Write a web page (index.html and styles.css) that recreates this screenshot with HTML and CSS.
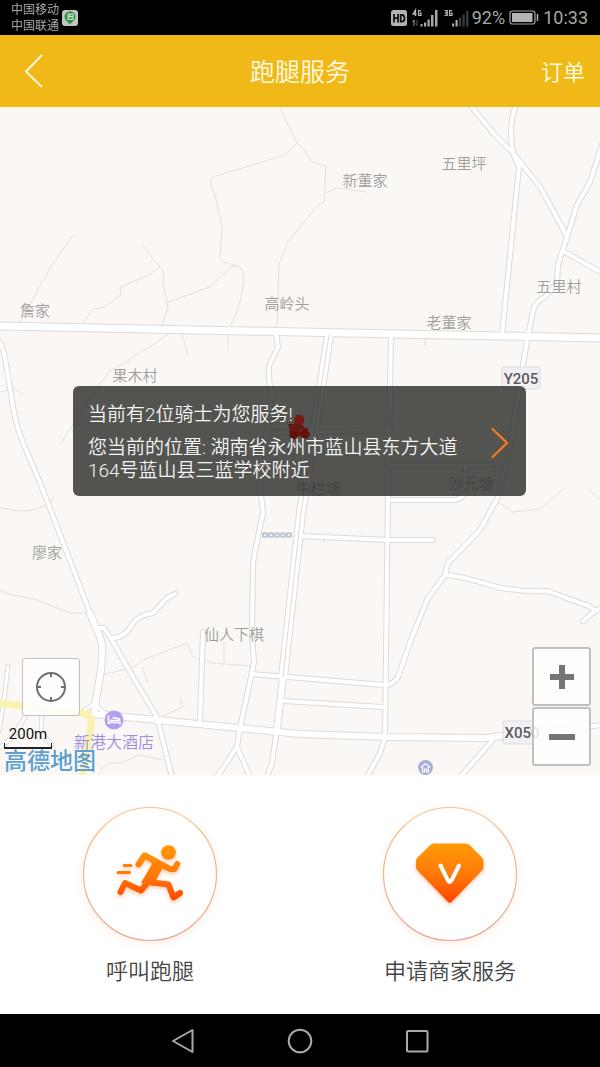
FILE: index.html
```html
<!DOCTYPE html>
<html lang="zh-CN">
<head>
<meta charset="utf-8">
<meta name="viewport" content="width=device-width, initial-scale=1">
<title>跑腿服务</title>
<link rel="stylesheet" href="styles.css">
</head>
<body>
<div class="app">
  <div class="status">
    <div class="carriers"><span>中国移动</span><span>中国联通</span></div>
    <svg class="pin-app" viewBox="0 0 16 16" width="16" height="16" aria-hidden="true">
      <rect width="16" height="16" rx="3" fill="#c4c4c4"/>
      <path d="M8 14.500C6 12 2.500 10 2.500 6.800a5.500 5.500 0 0 1 11 0C13.500 10 10 12 8 14.500z" fill="#2b9440"/>
      <path d="M6 4v6M6 4.200h5v2.500H6M8 4.200v2.500M6 9.300h5V7" fill="none" stroke="#c9dccb" stroke-width="1.200"/>
    </svg>
    <div class="indicators">
      <svg viewBox="0 0 80 20" width="80" height="20" aria-hidden="true">
        <rect x="1" y="2" width="16" height="16" rx="2.500" fill="#b4b4b4"/>
        <path d="M4 6v8.500M8 6v8.500M4 10.200h4M10.700 6.800v6.900h1.300q2.500 0 2.500-3.400T12 6.800z" fill="none" stroke="#111" stroke-width="1.800"/>
        <g fill="none" stroke="#b4b4b4" stroke-width="1.300">
          <path d="M25.500 8V2l-2.500 4h3.500M31 2.700h-2.400v4.700H31V5.100h-1.200"/>
          <path d="M54.500 2.600h2.700v4.800h-2.700M55 5h2M62 2.700h-2.400v4.700H62V5.100h-1.200"/>
        </g>
        <path d="M22.500 14l1.500-2v6" stroke="#999" fill="none"/>
        <path d="M27 12v5.500l-1.200-2" stroke="#555" fill="none"/>
        <g fill="#a8a8a8"><rect x="30.500" y="16" width="2" height="2.500"/><rect x="34" y="14.500" width="2.200" height="4"/><rect x="37.500" y="11.500" width="2.200" height="7"/><rect x="41" y="7" width="2.500" height="11.500"/><rect x="45" y="2" width="2.500" height="16.500"/><rect x="62" y="15.500" width="2.200" height="3"/><rect x="65.500" y="12" width="2.200" height="6.500"/></g>
        <g fill="#3c3c3c"><rect x="69" y="9.500" width="2.200" height="9"/><rect x="72.500" y="6.500" width="2.200" height="12"/><rect x="76.200" y="3" width="2.200" height="15.500"/></g>
      </svg>
      <span>92%</span>
      <svg class="battery" viewBox="0 0 30 15" width="30" height="15" aria-hidden="true">
        <rect x="1" y="1" width="25" height="13" rx="2.500" fill="none" stroke="#a8a8a8" stroke-width="1.200"/>
        <rect x="3" y="3" width="20.500" height="9" fill="#b4b4b4"/>
        <path d="M28.500 4v7" stroke="#a8a8a8" stroke-width="1.600"/>
      </svg>
      <time>10:33</time>
    </div>
  </div>

  <header class="bar">
    <button class="back" aria-label="返回">
      <svg viewBox="0 0 20 34" width="20" height="34"><path d="M18 1L2 17.500 18 33" fill="none" stroke="#fff8d8" stroke-width="2"/></svg>
    </button>
    <h1>跑腿服务</h1>
    <a class="orders" href="#">订单</a>
  </header>

  <main class="map">
    <svg class="tiles" viewBox="0 107 600 668" preserveAspectRatio="xMidYMid slice" aria-label="地图">
      <defs>
        <g id="main-road"><path d="M-5 326L300 332 605 338"/></g>
        <g id="avenue"><path d="M329 335L320 394 301 513 283 677"/></g>
        <g id="bottom-road"><path d="M94 714L157 720 300 734 387 737 487 738 500 736"/></g>
        <g id="left-road"><path d="M90 613L100 637Q103 645 102 655L101 670 95 706 94 714"/><path d="M283 677L277 730"/></g>
        <g id="roads">
          <path d="M-2 340Q3 346 5 358L11 394Q14 420 22 440L43 490 90 613"/>
          <path d="M276 333L278 347 269 366Q268 380 272 395L268 428 260 462V485L263 513Q257 540 253 563L252 633 254 663 240 728 237 747 217 777M237 747L250 777"/>
          <path d="M391 335L388 490 385 737 380 753 367 777"/>
          <path d="M267 433L390 430M390 465H493M466 466V488Q464 500 453 500H390"/>
          <path d="M470 105L495 135 513 153 540 187 553 210 567 237"/>
          <path d="M516 105Q508 125 513 153L519 167 502 335"/>
          <path d="M602 145L590 182 577 205 567 237 558 265 557 283 545 297Q534 302 533 312L528 335 518 395 510 448 498 497 480 530 448 563 445 575 428 598 412 637 398 677Q392 686 384 685L300 678 252 674"/>
          <path d="M565 252L602 273M445 575Q458 575 497 587 520 592 548 591L580 603Q592 606 595 611L583 621M595 611L603 607"/>
          <path d="M300 536L390 540H433M283 701L383 707"/>
          <path d="M98 628H104L113 642 133 677 157 717 172 777"/>
          <path d="M113 638Q125 638 133 623 140 615 153 613L167 598 175 594M203 632L200 720"/>
          <path d="M493 740L460 777M277 730L272 763 267 777M500 736L602 725"/>
        </g>
        <g id="lanes">
          <path d="M8 666L4 700-1 731M25 717L12 738-2 749M42 713L41 733 52 745"/>
          <path d="M94 704L80 713M94 704L106 714"/>
        </g>
        <g id="yellow-road"><path d="M-2 703L83 713Q92 716 91 722L90 733 82 777"/></g>
      </defs>
      <rect y="107" width="600" height="668" fill="#faf7f4"/>
      <g class="trail">
        <path d="M280 108L297 143 285 155 213 177Q209 180 211 184L215 195 222 227 220 258Q221 262 237 266 246 269 243 285 240 310 230 326M237 266Q230 266 225 272L210 287 168 302M143 246L160 267 164 272 163 282 168 308 162 325M160 267L147 276 120 287 121 295 105 307 93 309 83 323M73 235L50 268 19 324"/>
        <path d="M297 143L303 148 312 162 326 166 324 202 317 206 300 227 288 242 279 265 277 330M326 193L337 188 367 192"/>
        <path d="M168 334L150 347 135 355 128 361 110 371 92 394 60 445M182 334L188 356M228 334V350M-2 393L13 388 23 394M-2 507Q27 516 47 505L54 497M-2 589L8 594 37 600 70 613H88"/>
        <path d="M103 675L133 667 143 660 187 643 193 657 213 663 250 666M224 642V663M142 667L148 683M163 716L182 707 181 697M100 770L108 763 120 763 140 755 163 760M498 502L513 512 540 509 562 490M590 490L602 502M425 338V345M324 538V543M384 573H388M383 641H387"/>
      </g>
      <g class="road">
        <use href="#lanes" class="casing w5"/><use href="#roads" class="casing w6"/><use href="#avenue" class="casing w10"/><use href="#bottom-road" class="casing w8"/><use href="#left-road" class="casing w8"/><use href="#main-road" class="casing w9"/>
        <use href="#lanes" class="fill w3"/><use href="#roads" class="fill w4"/><use href="#avenue" class="fill w8"/><use href="#bottom-road" class="fill w6"/><use href="#left-road" class="fill w6"/><use href="#main-road" class="fill w7"/>
        <use href="#yellow-road" class="yellow"/><use href="#avenue" class="median"/>
      </g>
      <path d="M262 535H292" stroke="#d3d6dc" stroke-width="5"/>
      <path d="M265 535H292" stroke="#aeb4c0" stroke-width="5" stroke-linecap="round" stroke-dasharray="0 6"/>
      <path d="M265 535H292" stroke="#eef0f4" stroke-width="3" stroke-linecap="round" stroke-dasharray="0 6"/>
      <g class="place" text-anchor="middle">
        <text x="464" y="169">五里坪</text><text x="365" y="186">新董家</text><text x="35" y="316">詹家</text><text x="287" y="309">高岭头</text><text x="449" y="328">老董家</text><text x="559" y="292">五里村</text><text x="135" y="381">果木村</text><text x="47" y="558">廖家</text><text x="234" y="640">仙人下棋</text><text x="318" y="494">牛栏塘</text><text x="471" y="489">沙元塘</text>
      </g>
      <g class="route" text-anchor="middle">
        <rect x="502" y="367" width="38" height="22" rx="2"/><text x="521" y="384">Y205</text>
        <rect x="503" y="721" width="38" height="23" rx="2"/><text x="522" y="738">X050</text>
      </g>
      <circle cx="114" cy="720" r="9.500" fill="#b3a0ee"/>
      <path d="M108.500 715.500V724M108.500 722.500H120V724.500M110 720.500H119.500V719L112.500 717.500" fill="none" stroke="#fff" stroke-width="1.600"/>
      <text class="hotel" x="114" y="748" text-anchor="middle">新港大酒店</text>
      <circle cx="425.500" cy="767.500" r="7.500" fill="#a5aee0"/>
      <path d="M421 767.500L425.500 763.500 430 767.500M422.500 767V772H424.500V769H426.500V772H428.500V767" fill="none" stroke="#fff" stroke-width="1.200"/>
    </svg>

    <button class="notice">
      <span class="notice-text">
        <span class="riders">当前有2位骑士为您服务!</span>
        <span class="address">您当前的位置: 湖南省永州市蓝山县东方大道164号蓝山县三蓝学校附近</span>
      </span>
      <svg class="rider" viewBox="0 0 24 26" width="24" height="26" aria-hidden="true">
        <path d="M7 5l2-4h5l3 2v5l-3 3H9L6 9l2-1z" fill="#741a12"/>
        <path d="M9 11l6-1 3 4h3v3h-5l-3-2-1 5-5-2z" fill="#661812"/>
        <path d="M1 10h8v7H3z" fill="#6a1a13"/>
        <path d="M2 17h10l6-1 5 3-1 3H4z" fill="#701009"/>
        <circle cx="6.500" cy="21" r="4" fill="#5f120c"/><circle cx="18" cy="20.500" r="4" fill="#66100a"/>
      </svg>
      <svg class="arrow" viewBox="0 0 18 32" width="18" height="32" aria-hidden="true"><path d="M1 1.500L16 16 1 30.500" fill="none" stroke="#f07a1c" stroke-width="2.400"/></svg>
    </button>

    <button class="tool locate" aria-label="定位">
      <svg viewBox="0 0 32 32" width="32" height="32"><g fill="none" stroke="#6e6e6e" stroke-width="2"><circle cx="16" cy="16" r="14"/><path d="M16 2v4M16 26v4M2 16h4M26 16h4"/></g></svg>
    </button>
    <div class="zoom">
      <button class="tool" aria-label="放大"><svg viewBox="0 0 26 26" width="26" height="26"><path d="M1 13H25M13 1V25" stroke="#757575" stroke-width="6"/></svg></button>
      <button class="tool" aria-label="缩小"><svg viewBox="0 0 26 26" width="26" height="26"><path d="M0 13H26" stroke="#757575" stroke-width="6"/></svg></button>
    </div>
    <div class="credit">
      <span class="scale">200m</span>
      <span class="brand">高德地图</span>
    </div>
  </main>

  <section class="services">
    <a class="service" href="#">
      <svg viewBox="0 0 150 150" width="150" height="150" aria-hidden="true">
        <defs>
          <linearGradient id="ring" x1="0" y1="0" x2="0" y2="1"><stop offset="0" stop-color="#f6c487"/><stop offset="1" stop-color="#eba592"/></linearGradient>
          <linearGradient id="heat" gradientUnits="userSpaceOnUse" x1="0" y1="45" x2="0" y2="105"><stop offset="0" stop-color="#ff9a08"/><stop offset=".5" stop-color="#ff7a08"/><stop offset="1" stop-color="#ff4300"/></linearGradient>
        </defs>
        <circle class="ring" cx="75" cy="75" r="66.500" fill="#fff" stroke="url(#ring)" stroke-width="1.200"/>
        <g class="glow">
          <circle cx="93.500" cy="53.500" r="7.300" fill="url(#heat)"/>
          <path d="M70 53L90 65 81.500 80 79 87 66 84 77 65z" fill="url(#heat)"/>
          <g fill="none" stroke="url(#heat)" stroke-linecap="round" stroke-linejoin="round">
            <path d="M63.500 65.500L69.500 56.500 95 70 99.500 70 102.300 65" stroke-width="6"/>
            <path d="M74 82L66 91.500 50 84 45.500 93" stroke-width="6"/>
            <path d="M74 83L93.500 85.500 98.500 98.500 105 94" stroke-width="6"/>
            <path d="M49 66.500H56M43 73.500H54.500" stroke-width="3"/>
          </g>
        </g>
      </svg>
      <span>呼叫跑腿</span>
    </a>
    <a class="service" href="#">
      <svg viewBox="0 0 150 150" width="150" height="150" aria-hidden="true">
        <circle class="ring" cx="75" cy="75" r="66.500" fill="#fff" stroke="url(#ring)" stroke-width="1.200"/>
        <path class="glow" d="M58.500 44.500H91Q93 44.500 94.500 46L107 58.500Q108.500 60 108.500 62V68Q108.500 70 107 71.500L77 102.500Q74.700 105 72.500 102.500L42.500 71.500Q41 70 41 68V62Q41 60 42.500 58.500L55.500 46Q57 44.500 58.500 44.500z" fill="url(#heat)"/>
        <path d="M65.500 66.500L73 81.500Q74.700 84.500 76.500 81.500L84 66.500" fill="none" stroke="#fff" stroke-width="4" stroke-linecap="round"/>
      </svg>
      <span>申请商家服务</span>
    </a>
  </section>

  <nav class="nav">
    <button aria-label="后退"><svg viewBox="0 0 26 26" width="26" height="26"><path d="M22.500 2V24L3 13z"/></svg></button>
    <button aria-label="主页"><svg viewBox="0 0 26 26" width="26" height="26"><circle cx="13" cy="13" r="11.300"/></svg></button>
    <button aria-label="最近任务"><svg viewBox="0 0 26 26" width="26" height="26"><rect x="3" y="3" width="20.500" height="20.500" rx="1"/></svg></button>
  </nav>
</div>
</body>
</html>
```

FILE: styles.css
```css
* { box-sizing: border-box; }
body {
  margin: 0;
  font-family: Roboto, "Noto Sans CJK SC", sans-serif;
  font-weight: 400;
  background: #fff;
}
button {
  margin: 0;
  padding: 0;
  border: 0;
  background: none;
  font: inherit;
  color: inherit;
  cursor: pointer;
}
a { color: inherit; text-decoration: none; }
svg { display: block; }

.app { display: flex; flex-direction: column; min-height: 100vh; }

.status {
  display: flex;
  align-items: center;
  gap: 3px;
  height: 35px;
  padding: 0 12px 0 11px;
  background: #000;
  color: #a8a8a8;
}
.carriers { display: flex; flex-direction: column; font-size: 12px; line-height: 16px; }
.indicators { display: flex; align-items: center; gap: 4px; margin-left: auto; font-size: 18px; line-height: 20px; }
.indicators > span { margin-left: -2px; }

.bar {
  display: grid;
  grid-template-columns: 1fr auto 1fr;
  align-items: center;
  height: 72px;
  padding: 0 15px 0 24px;
  background: #f0b917;
  color: #fffbe6;
}
.back { justify-self: start; }
.bar h1 { margin: 0 9px 0 0; padding-top: 4px; font-size: 25px; font-weight: 350; line-height: 36px; }
.orders { justify-self: end; padding-top: 4px; font-size: 22px; font-weight: 350; line-height: 32px; }

.map { position: relative; flex: 1 0 480px; overflow: hidden; background: #faf7f4; }
.tiles { position: absolute; inset: 0; width: 100%; height: 100%; }
.trail { fill: none; stroke: #e3e0dd; stroke-width: 1; }
.road { fill: none; stroke-linejoin: round; stroke-linecap: round; }
.casing { stroke: #dedbd8; }
.fill { stroke: #fff; }
.yellow { stroke: #fbf0ae; stroke-width: 7; }
.median { stroke: #dedbd8; stroke-width: 1; }
.w3 { stroke-width: 3; }
.w4 { stroke-width: 4; }
.w5 { stroke-width: 5; }
.w6 { stroke-width: 6; }
.w7 { stroke-width: 7; }
.w8 { stroke-width: 8; }
.w9 { stroke-width: 9; }
.w10 { stroke-width: 10; }
.place { font-size: 15px; font-weight: 350; fill: #a09e9c; }
.route rect { fill: #f1f0f4; stroke: #dcdbe2; }
.route text { font-size: 15px; font-weight: 500; fill: #5c5c60; }
.hotel { font-size: 16px; font-weight: 350; fill: #a08ce4; }

.notice {
  position: absolute;
  top: 279px;
  left: 73px;
  right: 74px;
  display: flex;
  align-items: center;
  justify-content: space-between;
  min-height: 110px;
  padding: 17px 17px 14px 15px;
  border-radius: 6px;
  background: rgba(46, 46, 44, 0.82);
  color: #f4f4f4;
  text-align: left;
}
.notice-text { position: relative; z-index: 1; display: flex; flex-direction: column; gap: 10px; max-width: 380px; font-size: 19px; line-height: 23px; font-weight: 350; }
.rider { position: absolute; left: 214px; top: 28px; }

.tool {
  display: grid;
  place-items: center;
  width: 59px;
  height: 59px;
  border: 2px solid #c2c0be;
  border-radius: 3px;
  background: rgba(255, 255, 255, 0.85);
}
.locate { position: absolute; left: 22px; bottom: 59px; width: 58px; height: 58px; border-width: 1px; }
.zoom { position: absolute; right: 9px; bottom: 9px; display: grid; gap: 1px; }

.credit { position: absolute; left: 4px; bottom: 0; display: flex; flex-direction: column; align-items: flex-start; }
.scale {
  position: relative;
  width: 48px;
  padding-bottom: 3px;
  border-bottom: 2px solid #222;
  font-size: 15px;
  line-height: 20px;
  text-align: center;
  color: #111;
}
.scale::after {
  content: "";
  position: absolute;
  left: 0;
  right: 0;
  bottom: 0;
  height: 4px;
  border: solid #222;
  border-width: 0 1px;
}
.brand { font-size: 23px; line-height: 26px; font-weight: 500; color: #5c9fd0; }

.services {
  display: grid;
  grid-template-columns: 1fr 1fr;
  padding: 24px 0 26px;
  background: #fff;
}
.service {
  display: flex;
  flex-direction: column;
  align-items: center;
  gap: 7px;
  font-size: 22px;
  line-height: 32px;
  font-weight: 350;
  color: #444;
}
.ring { filter: drop-shadow(0 3px 4px rgba(255, 150, 90, 0.14)); }
.glow { filter: drop-shadow(0 2px 2px rgba(255, 100, 30, 0.35)); }

.nav {
  display: flex;
  justify-content: center;
  align-items: center;
  gap: 91px;
  height: 53px;
  background: #000;
}
.nav svg { fill: none; stroke: #a9a9a9; stroke-width: 2; stroke-linejoin: round; }
```
